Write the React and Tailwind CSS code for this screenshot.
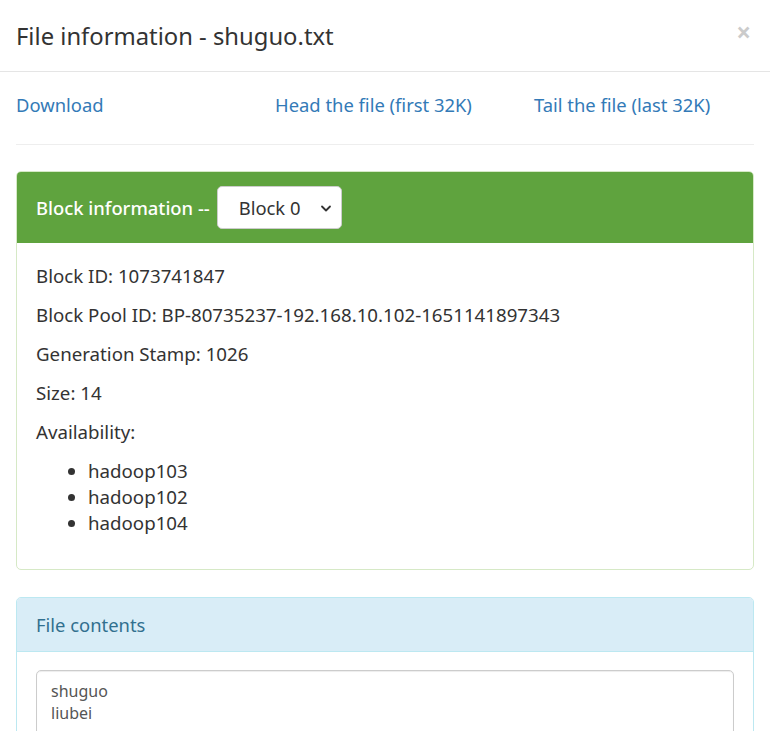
import React from "react";

export default function App() {
  return (
    <div className="w-[770px] h-[731px] overflow-hidden bg-white text-[#333] font-['Noto_Sans','Open_Sans',sans-serif]">
      <div className="flex items-center justify-between h-[72px] px-4 border-b border-[#e5e5e5]">
        <h4 className="text-[23.8px] leading-[32px] text-[#333]">File information - shuguo.txt</h4>
        <button className="text-[26px] leading-none font-bold text-black opacity-20 -mt-[8px] mr-[3px]">×</button>
      </div>
      <div className="px-4 pt-[20px]">
        <div className="flex text-[18.4px] leading-[25px] text-[#337ab7]">
          <a className="w-[259px]">Download</a>
          <a className="w-[259px]">Head the file (first 32K)</a>
          <a>Tail the file (last 32K)</a>
        </div>
        <hr className="mt-[27px] border-t border-[#eee]" />
        <div className="mt-[26px] border border-[#d6e9c6] rounded-[5px] overflow-hidden">
          <div className="flex items-center h-[71px] px-[19px] bg-[#5fa33e] text-white text-[18.4px]">
            <span className="font-medium">Block information --</span>
            <div className="ml-[7px] flex items-center justify-between w-[125px] h-[43px] bg-white border border-[#ccc] rounded-[5px] pl-[21px] pr-[8px] text-[#333] text-[18.4px]">
              <span>Block 0</span>
              <svg width="14" height="14" viewBox="0 0 14 14" fill="none" stroke="#333" strokeWidth="1.8" strokeLinecap="round" strokeLinejoin="round"><path d="M3 5.5 7 9.5l4-4" /></svg>
            </div>
          </div>
          <div className="px-[19px] pt-[20px] pb-[20px] text-[18.7px] leading-[26px]">
            <p className="mb-[13px]">Block ID: 1073741847</p>
            <p className="mb-[13px]">Block Pool ID: BP-80735237-192.168.10.102-1651141897343</p>
            <p className="mb-[13px]">Generation Stamp: 1026</p>
            <p className="mb-[13px]">Size: 14</p>
            <p className="mb-[13px]">Availability:</p>
            <ul className="list-disc pl-[52px] mb-[13px]">
              <li>hadoop103</li>
              <li>hadoop102</li>
              <li>hadoop104</li>
            </ul>
          </div>
        </div>
        <div className="mt-[27px] border border-[#bce8f1] rounded-[5px] overflow-hidden">
          <div className="flex items-center h-[54px] px-[19px] bg-[#d9edf7] text-[#31708f] text-[18.4px] border-b border-[#bce8f1]">
            File contents
          </div>
          <div className="px-[19px] pt-[18px] pb-[20px]">
            <div className="border border-[#ccc] rounded-[5px] shadow-[inset_0_1px_1px_rgba(0,0,0,0.075)] px-[14px] pt-[9px] h-[120px] text-[16px] leading-[22px] text-[#555]">
              <div>shuguo</div>
              <div>liubei</div>
            </div>
          </div>
        </div>
      </div>
    </div>
  );
}
